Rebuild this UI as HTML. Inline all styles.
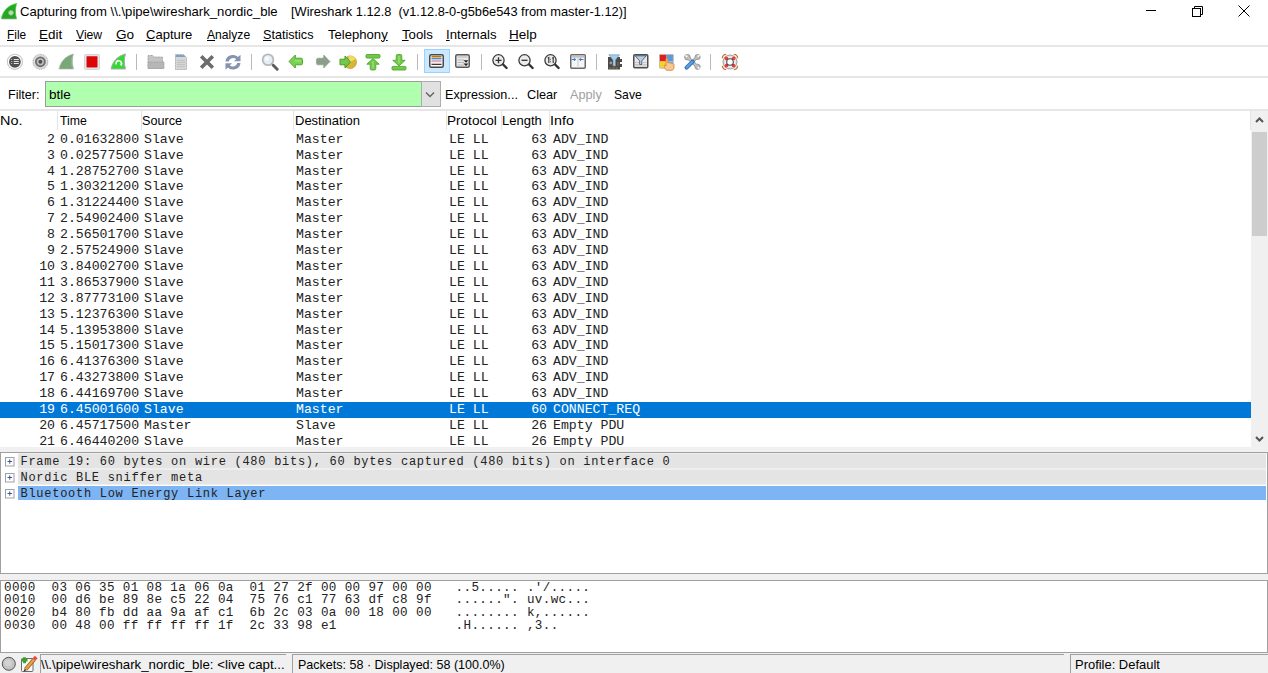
<!DOCTYPE html><html><head><meta charset="utf-8"><style>
*{margin:0;padding:0;box-sizing:border-box}
html,body{width:1268px;height:673px;overflow:hidden;background:#fff;position:relative}
div,svg{position:absolute}
.ui{font-family:"Liberation Sans",sans-serif;font-size:13px;line-height:15px;color:#000;white-space:pre}
.m{font-family:"Liberation Mono",monospace;font-size:13.2px;line-height:15.9px;color:#222;white-space:pre}
.u{text-decoration:underline;text-underline-offset:1px;text-decoration-thickness:1px}
.sep{background:#e6e6e6;height:2px;left:0;width:1268px}
.tsep{width:1px;height:16px;top:54px;background:#b9b9b9}
.hsep{width:1px;top:111px;height:19px;background:#e5e5e5}
</style></head><body>

<svg style="left:1px;top:3px" width="17" height="17" viewBox="0 0 17 17"><path d="M0.4 15.8 C1.5 9 6 2.5 15.6 0.4 C14.2 5 14 11 15.6 15.8 Z" fill="#22a822" stroke="#4cc84c" stroke-width="0.7"/><path d="M1.5 15.6 H15" stroke="#6a9a6a" stroke-width="1"/><circle cx="10" cy="9.8" r="2.4" fill="#b8d8b0" stroke="#a0c098" stroke-width="1" stroke-dasharray="1 0.8"/></svg>
<div class="ui" style="left:19.99px;top:3.5999999999999996px;transform:scaleX(1.0102);transform-origin:0 0;">Capturing from \\.\pipe\wireshark_nordic_ble</div>
<div class="ui" style="left:290.81px;top:3.5999999999999996px;transform:scaleX(0.9858);transform-origin:0 0;">[Wireshark 1.12.8  (v1.12.8-0-g5b6e543 from master-1.12)]</div>
<div style="left:1146px;top:10px;width:10px;height:1px;background:#000"></div>
<svg style="left:1190px;top:4px" width="14" height="14" viewBox="0 0 14 14"><rect x="2.5" y="4.5" width="8" height="8" fill="none" stroke="#000" stroke-width="1"/><path d="M4.5 4.5 V2.5 H12.5 V10.5 H10.5" fill="none" stroke="#000" stroke-width="1"/></svg>
<svg style="left:1238px;top:5px" width="12" height="12" viewBox="0 0 12 12"><path d="M0.5 0.5 L11.5 11.5 M11.5 0.5 L0.5 11.5" stroke="#000" stroke-width="1"/></svg>
<div class="ui" style="left:6.99px;top:26.6px;transform:scaleX(0.915);transform-origin:0 0;"><span class="u">F</span>ile</div>
<div class="ui" style="left:39.37px;top:26.6px;transform:scaleX(1.0333);transform-origin:0 0;"><span class="u">E</span>dit</div>
<div class="ui" style="left:76.3px;top:26.6px;transform:scaleX(0.9357);transform-origin:0 0;"><span class="u">V</span>iew</div>
<div class="ui" style="left:115.66px;top:26.6px;transform:scaleX(1.0438);transform-origin:0 0;"><span class="u">G</span>o</div>
<div class="ui" style="left:146.3px;top:26.6px;transform:scaleX(1.0022);transform-origin:0 0;"><span class="u">C</span>apture</div>
<div class="ui" style="left:207.3px;top:26.6px;transform:scaleX(0.9326);transform-origin:0 0;"><span class="u">A</span>nalyze</div>
<div class="ui" style="left:263.43px;top:26.6px;transform:scaleX(0.9706);transform-origin:0 0;"><span class="u">S</span>tatistics</div>
<div class="ui" style="left:328.0px;top:26.6px;transform:scaleX(1.0068);transform-origin:0 0;">Telephon<span class="u">y</span></div>
<div class="ui" style="left:401.5px;top:26.6px;transform:scaleX(1.0167);transform-origin:0 0;"><span class="u">T</span>ools</div>
<div class="ui" style="left:446.19px;top:26.6px;transform:scaleX(1.0125);transform-origin:0 0;"><span class="u">I</span>nternals</div>
<div class="ui" style="left:509.26px;top:26.6px;transform:scaleX(1.036);transform-origin:0 0;"><span class="u">H</span>elp</div>
<div class="sep" style="top:44.6px"></div>
<svg style="left:6px;top:53px" width="18" height="18" viewBox="0 0 18 18"><circle cx="8.9" cy="8.8" r="7.6" fill="#fff" stroke="#c8c8c8" stroke-width="1.1"/><circle cx="8.9" cy="8.8" r="5.9" fill="#505050"/><path d="M7.8 6.5H12.8M7.8 8.5H12.8M7.8 10.5H12.8" stroke="#e6e6e6" stroke-width="1"/><path d="M5 6.5H6.2M5 8.5H6.2M5 10.5H6.2" stroke="#b0b0b0" stroke-width="1"/></svg>
<svg style="left:31px;top:53px" width="18" height="18" viewBox="0 0 18 18"><circle cx="9.4" cy="8.8" r="7.4" fill="#dcdcdc" stroke="#b4b4b4" stroke-width="1.2" stroke-dasharray="1 0.7"/><circle cx="9.4" cy="8.8" r="5.4" fill="#6e6e6e"/><circle cx="9.4" cy="8.8" r="3.5" fill="#c4c4c4" stroke="#9a9a9a" stroke-width="0.6" stroke-dasharray="0.8 0.6"/><circle cx="9.4" cy="8.8" r="2" fill="#505050"/></svg>
<svg style="left:58px;top:53px" width="17" height="17" viewBox="0 0 17 17"><path d="M1 16 C2.5 9 7 3 15.5 1 C14 5 14 11 15.5 16 Z" fill="#78a878" stroke="#b4b4b4" stroke-width="1" stroke-dasharray="1 0.6"/><path d="M13.6 5 V14" stroke="#a8d8a0" stroke-width="0.8" stroke-dasharray="0.8 1"/></svg>
<svg style="left:84px;top:54px" width="16" height="16" viewBox="0 0 16 16"><rect x="0.5" y="0.5" width="15" height="15" rx="1" fill="#e2e5e8" stroke="#d0d4d8" stroke-width="1"/><rect x="2.5" y="2.2" width="11" height="11.2" rx="0.6" fill="#dc0606"/></svg>
<svg style="left:110px;top:53px" width="17" height="17" viewBox="0 0 17 17"><path d="M1 16 C2.5 9 7 3 15.5 1 C14 5 14 11 15.5 16 Z" fill="#36d636" stroke="#a8b0a8" stroke-width="1"/><path d="M6.2 11.5 A2.8 2.8 0 1 1 11 12.2" fill="none" stroke="#f0fff0" stroke-width="1.6"/><path d="M9.5 10.8 L11.8 13.6 L12.4 10.2 Z" fill="#f0fff0"/></svg>
<div class="tsep" style="left:136px"></div>
<svg style="left:147px;top:54px" width="18" height="16" viewBox="0 0 18 16"><path d="M1 1.5 H5.8 L7 3 H15.5 V14.5 H1 Z" fill="#c4c4c4" stroke="#a4a4a4" stroke-width="1" stroke-dasharray="1 0.5"/><path d="M1.2 8 H17 V14.5 H1.2 Z" fill="#b6b6b6" stroke="#a4a4a4" stroke-width="1" stroke-dasharray="1 0.5"/></svg>
<svg style="left:174px;top:54px" width="14" height="17" viewBox="0 0 14 17"><path d="M1.5 0.5 H9.5 L12.5 3.5 V15.5 H1.5 Z" fill="#d6d6d6" stroke="#aaaaaa" stroke-width="1" stroke-dasharray="1 0.5"/><path d="M2 1 H9.5 L11.5 3 H2 Z" fill="#7aa2cc"/><path d="M3 6.5H11M3 8.5H11M3 10.5H11M3 12.5H11" stroke="#bcbcbc" stroke-width="0.8"/></svg>
<svg style="left:199px;top:54px" width="16" height="16" viewBox="0 0 16 16"><path d="M2.2 2.2 L13.8 13.8 M13.8 2.2 L2.2 13.8" stroke="#6c6c6c" stroke-width="3.6"/></svg>
<svg style="left:224px;top:54px" width="18" height="17" viewBox="0 0 18 17"><path d="M1.5 7.5 C2 3 5.5 1 9 1 C11.5 1 13 2 14 3 L16.5 0.8 V7.2 H10 L12.2 5 C11.4 4.3 10.4 4 9.2 4 C7 4 5.3 5.4 4.8 7.5 Z" fill="#8494ae"/><path d="M16.5 9 C16 13.5 12.5 15.5 9 15.5 C6.5 15.5 5 14.5 4 13.5 L1.5 15.7 V9.3 H8 L5.8 11.5 C6.6 12.2 7.6 12.5 8.8 12.5 C11 12.5 12.7 11.1 13.2 9 Z" fill="#8494ae"/></svg>
<div class="tsep" style="left:251px"></div>
<svg style="left:261px;top:53px" width="19" height="19" viewBox="0 0 19 19"><path d="M12 12 L16.2 16.2" stroke="#5e5e5e" stroke-width="3" stroke-linecap="round"/><circle cx="7" cy="6.8" r="5.4" fill="#e4eef6" stroke="#b8b8b8" stroke-width="1.8"/><circle cx="6" cy="5.6" r="2.2" fill="#fff" opacity="0.7"/></svg>
<svg style="left:288px;top:54px" width="16" height="16" viewBox="0 0 16 16"><path d="M1 7.5 L7.3 1 V4.2 H13 Q14.5 4.2 14.5 5.7 V9.3 Q14.5 10.8 13 10.8 H7.3 V14 Z" fill="#7ad050" stroke="#52a82c" stroke-width="1"/><path d="M7 7 H13" stroke="#a8e890" stroke-width="1"/></svg>
<svg style="left:315px;top:54px" width="16" height="16" viewBox="0 0 16 16"><path d="M15 7.5 L8.7 1 V4.2 H3 Q1.5 4.2 1.5 5.7 V9.3 Q1.5 10.8 3 10.8 H8.7 V14 Z" fill="#8e9c8e" stroke="#78a878" stroke-width="1" stroke-dasharray="1 0.6"/></svg>
<svg style="left:339px;top:54px" width="18" height="16" viewBox="0 0 18 16"><circle cx="11.2" cy="8.2" r="6.3" fill="#d6b632" stroke="#d09a50" stroke-width="0.8"/><path d="M11.2 8.2 L9.5 2.2 A6.3 6.3 0 0 1 16.5 5 Z" fill="#f0e050"/><path d="M10.4 8 L9.8 3 L12 4 Z" fill="#f4c8b0"/><path d="M1 5.2 H6 V2 L11.5 8 L6 14 V10.8 H1 Z" fill="#72c84a" stroke="#46a022" stroke-width="1"/></svg>
<svg style="left:365px;top:54px" width="16" height="17" viewBox="0 0 16 17"><rect x="1" y="0.5" width="14" height="3.6" rx="1" fill="#72c84a" stroke="#52a82c" stroke-width="0.9"/><path d="M8 4.6 L14.2 10.2 H10.8 V14.6 Q10.8 16 9.4 16 H6.6 Q5.2 16 5.2 14.6 V10.2 H1.8 Z" fill="#72c84a" stroke="#52a82c" stroke-width="0.9"/><path d="M8 7 V14.5" stroke="#a8e890" stroke-width="1"/></svg>
<svg style="left:391px;top:54px" width="16" height="17" viewBox="0 0 16 17"><rect x="1" y="12.4" width="14" height="3.6" rx="1" fill="#72c84a" stroke="#52a82c" stroke-width="0.9"/><path d="M8 11.9 L14.2 6.3 H10.8 V1.9 Q10.8 0.5 9.4 0.5 H6.6 Q5.2 0.5 5.2 1.9 V6.3 H1.8 Z" fill="#72c84a" stroke="#52a82c" stroke-width="0.9"/><path d="M8 2 V9.5" stroke="#a8e890" stroke-width="1"/></svg>
<div class="tsep" style="left:417px"></div>
<div style="left:424px;top:49px;width:26px;height:24px;background:#cce8ff;border:1px solid #99d1ff"></div>
<svg style="left:429px;top:54px" width="15" height="14" viewBox="0 0 15 14"><rect x="0.75" y="0.75" width="13.5" height="12.5" rx="1.5" fill="#fafafa" stroke="#4a4a4a" stroke-width="1.5"/><path d="M2.5 2.5H12.5" stroke="#d85a4a" stroke-width="1"/><path d="M2.5 3.5H12.5" stroke="#b8d84a" stroke-width="1"/><path d="M2.5 4.5H12.5" stroke="#4a8ad8" stroke-width="1"/><path d="M2.5 6H12.5" stroke="#7aaab8" stroke-width="1"/><path d="M2.5 7.2H12.5" stroke="#d87a8a" stroke-width="0.9"/><path d="M2.5 9.3H12.5" stroke="#d0a0b0" stroke-width="0.9"/><path d="M2.5 10.5H12.5" stroke="#3a3a3a" stroke-width="1"/></svg>
<svg style="left:455px;top:54px" width="15" height="14" viewBox="0 0 15 14"><rect x="0.75" y="0.75" width="13.5" height="12.5" rx="1.5" fill="#eaeaea" stroke="#5a5a5a" stroke-width="1.5"/><path d="M2.5 3H12.5M2.5 6H9M2.5 8.5H9M2.5 11H9" stroke="#b4b4b4" stroke-width="1.2"/><path d="M8.5 6.3 H13.5 L11 8.8 Z M8.5 9.6 H13.5 L11 12.1 Z" fill="#202020"/></svg>
<div class="tsep" style="left:481px"></div>
<svg style="left:492px;top:53px" width="18" height="18" viewBox="0 0 18 18"><path d="M10.6 11 L14.6 15" stroke="#303030" stroke-width="2.4" stroke-linecap="round"/><circle cx="6.5" cy="7.3" r="5.6" fill="#ececec" stroke="#3a3a3a" stroke-width="1.3"/><path d="M3.5 7.3H9.5M6.5 4.3V10.3" stroke="#303030" stroke-width="1.3"/></svg>
<svg style="left:518px;top:53px" width="18" height="18" viewBox="0 0 18 18"><path d="M10.6 11 L14.6 15" stroke="#303030" stroke-width="2.4" stroke-linecap="round"/><circle cx="6.5" cy="7.3" r="5.6" fill="#ececec" stroke="#3a3a3a" stroke-width="1.3"/><path d="M3.5 7.3H9.5" stroke="#303030" stroke-width="1.3"/></svg>
<svg style="left:544px;top:53px" width="18" height="18" viewBox="0 0 18 18"><path d="M10.6 11 L14.6 15" stroke="#303030" stroke-width="2.4" stroke-linecap="round"/><circle cx="6.5" cy="7.3" r="5.6" fill="#ececec" stroke="#3a3a3a" stroke-width="1.3"/><path d="M3.8 5.3 L4.8 4.6 V10 M8.2 5.3 L9.2 4.6 V10" stroke="#303030" stroke-width="1.1" fill="none"/><path d="M6.5 5.8V6.6M6.5 8.4V9.2" stroke="#303030" stroke-width="1"/></svg>
<svg style="left:570px;top:54px" width="16" height="15" viewBox="0 0 16 15"><rect x="0.75" y="0.75" width="14.5" height="13.5" rx="1" fill="#f6f6f6" stroke="#6a6a6a" stroke-width="1.5"/><rect x="1.5" y="1.5" width="13" height="2.2" fill="#c0c0c0"/><path d="M8 3.5V14" stroke="#d0d0d0" stroke-width="1.2"/><path d="M1.8 5.5H5.2M4 4.3L5.4 5.5L4 6.7M9.8 5.5H13.5M11 4.3L9.6 5.5L11 6.7" stroke="#3b78c8" stroke-width="1.1" fill="none"/></svg>
<div class="tsep" style="left:596px"></div>
<svg style="left:607px;top:54px" width="17" height="17" viewBox="0 0 17 17"><path d="M1 3 H13 V5 H15 V8 H13 V10 H15 V13 H13 V15.5 H1 Z" fill="#4a4a4a"/><circle cx="3.8" cy="9" r="1.4" fill="#9a9a9a"/><path d="M2 14H11" stroke="#b08a3a" stroke-width="1" stroke-dasharray="0.8 0.6"/><path d="M10 9H12M10 11H12" stroke="#a07a30" stroke-width="0.8"/><path d="M1.8 0.8 H12.5 L8.5 6 V12 H6 V6 Z" fill="#a6cdee" stroke="#6a8aa8" stroke-width="0.6"/></svg>
<svg style="left:633px;top:54px" width="16" height="15" viewBox="0 0 16 15"><rect x="0.75" y="0.75" width="14" height="13" rx="1" fill="#e8e8e8" stroke="#4e4e4e" stroke-width="1.5"/><path d="M2.2 1.8 H13.2 L8.8 6.8 V10.5 H6.6 V6.8 Z" fill="#b0d0ee" stroke="#3a3a3a" stroke-width="0.7"/><path d="M2 8.5H6M9.5 8.5H13.5M2 10.5H6M9.5 10.5H13.5M2 12H13.5" stroke="#bcbcbc" stroke-width="0.8"/></svg>
<svg style="left:659px;top:54px" width="17" height="17" viewBox="0 0 17 17"><rect x="0.5" y="0.5" width="7" height="7" fill="#e01c1c"/><rect x="7.5" y="0.5" width="6.8" height="7" fill="#5a9ad8"/><rect x="0.5" y="7.5" width="7" height="6.8" fill="#f2d430"/><rect x="7.5" y="7.5" width="6.8" height="6.8" fill="#78b0e4"/><rect x="0.5" y="0.5" width="13.8" height="13.8" rx="1" fill="none" stroke="#b8b8b8" stroke-width="0.8"/><path d="M7.5 16.3 C5.5 14.5 5 12.6 5.4 11 L7 12 V5 C7 4 8.8 4 8.8 5 V9 C9.5 8.5 10.5 8.5 11 9.2 C11.6 8.8 12.6 8.9 13 9.7 C13.6 9.4 14.8 9.6 15 10.6 V13 C15 14.6 14 16.3 13 16.3 Z" fill="#f4c890" stroke="#d88a40" stroke-width="0.9"/></svg>
<svg style="left:684px;top:54px" width="17" height="16" viewBox="0 0 17 16"><g stroke="#8e8e8e" stroke-width="0.8" fill="#b8b8b8"><path d="M4 3.6 L13.2 12.6" stroke="#8e8e8e" stroke-width="3.4"/><path d="M13 3.2 L9 7.2" stroke="#8e8e8e" stroke-width="3"/><circle cx="3.4" cy="3.2" r="2.8"/><circle cx="13.6" cy="3" r="2.6"/><circle cx="13.6" cy="12.8" r="2.6"/></g><path d="M4 3.6 L13.2 12.6" stroke="#c4c4c4" stroke-width="2"/><path d="M13 3.2 L9 7.2" stroke="#c4c4c4" stroke-width="1.6"/><g stroke="#fff" stroke-width="1.6"><path d="M1.6 1.4 L3.2 3"/><path d="M15.4 1.2 L13.8 2.8"/><path d="M15.4 14.6 L13.8 13"/></g><path d="M8.6 7.6 L2.6 13.6" stroke="#2f6fb8" stroke-width="4" stroke-linecap="round"/><path d="M8.4 7.8 L2.8 13.4" stroke="#5aa0e0" stroke-width="2.2" stroke-linecap="round"/></svg>
<div class="tsep" style="left:710px"></div>
<svg style="left:721px;top:53px" width="18" height="18" viewBox="0 0 18 18"><g fill="none" stroke="#c07838" stroke-width="1.3"><path d="M1.4 5.2 A4 4 0 0 1 5.2 1.4"/><path d="M12.8 1.4 A4 4 0 0 1 16.6 5.2"/><path d="M1.4 12.8 A4 4 0 0 0 5.2 16.6"/><path d="M12.8 16.6 A4 4 0 0 0 16.6 12.8"/></g><circle cx="9" cy="9" r="7" fill="#f0f0f0" stroke="#8c8c8c" stroke-width="0.9"/><circle cx="9" cy="9" r="5.6" fill="none" stroke="#dadada" stroke-width="0.7"/><g fill="#ec3c3c"><circle cx="5.4" cy="5.4" r="1.9"/><circle cx="12.6" cy="5.4" r="1.9"/><circle cx="5.4" cy="12.6" r="1.9"/><circle cx="12.6" cy="12.6" r="1.9"/></g><circle cx="9" cy="9" r="3.3" fill="#fff" stroke="#4a4a4a" stroke-width="1.1"/></svg>
<div class="sep" style="top:75.8px"></div>
<div class="ui" style="left:7.53px;top:86.6px;transform:scaleX(0.9677);transform-origin:0 0;">Filter:</div>
<div style="left:45px;top:81px;width:377px;height:26px;background:#afffaf;border:1px solid #9c9c9c;border-right:none"></div>
<div class="ui" style="left:49.16px;top:86.6px;transform:scaleX(1.04);transform-origin:0 0;">btle</div>
<div style="left:421px;top:81px;width:20px;height:26px;background:#e1e1e1;border:1px solid #adadad"></div>
<svg style="left:425px;top:91px" width="10" height="7" viewBox="0 0 10 7"><path d="M1 1.5 L5 5.5 L9 1.5" fill="none" stroke="#606060" stroke-width="1.3"/></svg>
<div class="ui" style="left:445.13px;top:86.6px;transform:scaleX(0.9699);transform-origin:0 0;">Expression...</div>
<div class="ui" style="left:527.22px;top:86.6px;transform:scaleX(0.9767);transform-origin:0 0;">Clear</div>
<div class="ui" style="left:569.8px;top:86.6px;transform:scaleX(0.9758);transform-origin:0 0;color:#a0a0a0">Apply</div>
<div class="ui" style="left:614.36px;top:86.6px;transform:scaleX(0.9357);transform-origin:0 0;">Save</div>
<div class="sep" style="top:108.5px"></div>
<div class="hsep" style="left:57.1px"></div>
<div class="hsep" style="left:140.5px"></div>
<div class="hsep" style="left:292.5px"></div>
<div class="hsep" style="left:446.0px"></div>
<div class="hsep" style="left:501.0px"></div>
<div class="hsep" style="left:549.0px"></div>
<div class="hsep" style="left:1249.5px"></div>
<div class="ui" style="left:0.39px;top:113.3px;transform:scaleX(1.1111);transform-origin:0 0;">No.</div>
<div class="ui" style="left:60.0px;top:113.3px;transform:scaleX(0.9464);transform-origin:0 0;">Time</div>
<div class="ui" style="left:141.83px;top:113.3px;transform:scaleX(0.9725);transform-origin:0 0;">Source</div>
<div class="ui" style="left:295.0px;top:113.3px;transform:scaleX(1.0);transform-origin:0 0;">Destination</div>
<div class="ui" style="left:446.96px;top:113.3px;transform:scaleX(1.0435);transform-origin:0 0;">Protocol</div>
<div class="ui" style="left:502.0px;top:113.3px;transform:scaleX(1.0);transform-origin:0 0;">Length</div>
<div class="ui" style="left:549.9px;top:113.3px;transform:scaleX(1.1);transform-origin:0 0;">Info</div>
<div class="m" style="left:0;top:131.7px;width:55px;text-align:right;color:#222">2</div>
<div class="m" style="left:60px;top:131.7px;width:81px;overflow:hidden;color:#222">0.01632800</div>
<div class="m" style="left:144px;top:131.7px;color:#222">Slave</div>
<div class="m" style="left:296px;top:131.7px;color:#222">Master</div>
<div class="m" style="left:449px;top:131.7px;color:#222">LE LL</div>
<div class="m" style="left:500px;top:131.7px;width:47px;text-align:right;color:#222">63</div>
<div class="m" style="left:553px;top:131.7px;color:#222">ADV_IND</div>
<div class="m" style="left:0;top:147.6px;width:55px;text-align:right;color:#222">3</div>
<div class="m" style="left:60px;top:147.6px;width:81px;overflow:hidden;color:#222">0.02577500</div>
<div class="m" style="left:144px;top:147.6px;color:#222">Slave</div>
<div class="m" style="left:296px;top:147.6px;color:#222">Master</div>
<div class="m" style="left:449px;top:147.6px;color:#222">LE LL</div>
<div class="m" style="left:500px;top:147.6px;width:47px;text-align:right;color:#222">63</div>
<div class="m" style="left:553px;top:147.6px;color:#222">ADV_IND</div>
<div class="m" style="left:0;top:163.5px;width:55px;text-align:right;color:#222">4</div>
<div class="m" style="left:60px;top:163.5px;width:81px;overflow:hidden;color:#222">1.28752700</div>
<div class="m" style="left:144px;top:163.5px;color:#222">Slave</div>
<div class="m" style="left:296px;top:163.5px;color:#222">Master</div>
<div class="m" style="left:449px;top:163.5px;color:#222">LE LL</div>
<div class="m" style="left:500px;top:163.5px;width:47px;text-align:right;color:#222">63</div>
<div class="m" style="left:553px;top:163.5px;color:#222">ADV_IND</div>
<div class="m" style="left:0;top:179.39999999999998px;width:55px;text-align:right;color:#222">5</div>
<div class="m" style="left:60px;top:179.39999999999998px;width:81px;overflow:hidden;color:#222">1.30321200</div>
<div class="m" style="left:144px;top:179.39999999999998px;color:#222">Slave</div>
<div class="m" style="left:296px;top:179.39999999999998px;color:#222">Master</div>
<div class="m" style="left:449px;top:179.39999999999998px;color:#222">LE LL</div>
<div class="m" style="left:500px;top:179.39999999999998px;width:47px;text-align:right;color:#222">63</div>
<div class="m" style="left:553px;top:179.39999999999998px;color:#222">ADV_IND</div>
<div class="m" style="left:0;top:195.29999999999998px;width:55px;text-align:right;color:#222">6</div>
<div class="m" style="left:60px;top:195.29999999999998px;width:81px;overflow:hidden;color:#222">1.31224400</div>
<div class="m" style="left:144px;top:195.29999999999998px;color:#222">Slave</div>
<div class="m" style="left:296px;top:195.29999999999998px;color:#222">Master</div>
<div class="m" style="left:449px;top:195.29999999999998px;color:#222">LE LL</div>
<div class="m" style="left:500px;top:195.29999999999998px;width:47px;text-align:right;color:#222">63</div>
<div class="m" style="left:553px;top:195.29999999999998px;color:#222">ADV_IND</div>
<div class="m" style="left:0;top:211.2px;width:55px;text-align:right;color:#222">7</div>
<div class="m" style="left:60px;top:211.2px;width:81px;overflow:hidden;color:#222">2.54902400</div>
<div class="m" style="left:144px;top:211.2px;color:#222">Slave</div>
<div class="m" style="left:296px;top:211.2px;color:#222">Master</div>
<div class="m" style="left:449px;top:211.2px;color:#222">LE LL</div>
<div class="m" style="left:500px;top:211.2px;width:47px;text-align:right;color:#222">63</div>
<div class="m" style="left:553px;top:211.2px;color:#222">ADV_IND</div>
<div class="m" style="left:0;top:227.1px;width:55px;text-align:right;color:#222">8</div>
<div class="m" style="left:60px;top:227.1px;width:81px;overflow:hidden;color:#222">2.56501700</div>
<div class="m" style="left:144px;top:227.1px;color:#222">Slave</div>
<div class="m" style="left:296px;top:227.1px;color:#222">Master</div>
<div class="m" style="left:449px;top:227.1px;color:#222">LE LL</div>
<div class="m" style="left:500px;top:227.1px;width:47px;text-align:right;color:#222">63</div>
<div class="m" style="left:553px;top:227.1px;color:#222">ADV_IND</div>
<div class="m" style="left:0;top:243.0px;width:55px;text-align:right;color:#222">9</div>
<div class="m" style="left:60px;top:243.0px;width:81px;overflow:hidden;color:#222">2.57524900</div>
<div class="m" style="left:144px;top:243.0px;color:#222">Slave</div>
<div class="m" style="left:296px;top:243.0px;color:#222">Master</div>
<div class="m" style="left:449px;top:243.0px;color:#222">LE LL</div>
<div class="m" style="left:500px;top:243.0px;width:47px;text-align:right;color:#222">63</div>
<div class="m" style="left:553px;top:243.0px;color:#222">ADV_IND</div>
<div class="m" style="left:0;top:258.9px;width:55px;text-align:right;color:#222">10</div>
<div class="m" style="left:60px;top:258.9px;width:81px;overflow:hidden;color:#222">3.84002700</div>
<div class="m" style="left:144px;top:258.9px;color:#222">Slave</div>
<div class="m" style="left:296px;top:258.9px;color:#222">Master</div>
<div class="m" style="left:449px;top:258.9px;color:#222">LE LL</div>
<div class="m" style="left:500px;top:258.9px;width:47px;text-align:right;color:#222">63</div>
<div class="m" style="left:553px;top:258.9px;color:#222">ADV_IND</div>
<div class="m" style="left:0;top:274.79999999999995px;width:55px;text-align:right;color:#222">11</div>
<div class="m" style="left:60px;top:274.79999999999995px;width:81px;overflow:hidden;color:#222">3.86537900</div>
<div class="m" style="left:144px;top:274.79999999999995px;color:#222">Slave</div>
<div class="m" style="left:296px;top:274.79999999999995px;color:#222">Master</div>
<div class="m" style="left:449px;top:274.79999999999995px;color:#222">LE LL</div>
<div class="m" style="left:500px;top:274.79999999999995px;width:47px;text-align:right;color:#222">63</div>
<div class="m" style="left:553px;top:274.79999999999995px;color:#222">ADV_IND</div>
<div class="m" style="left:0;top:290.7px;width:55px;text-align:right;color:#222">12</div>
<div class="m" style="left:60px;top:290.7px;width:81px;overflow:hidden;color:#222">3.87773100</div>
<div class="m" style="left:144px;top:290.7px;color:#222">Slave</div>
<div class="m" style="left:296px;top:290.7px;color:#222">Master</div>
<div class="m" style="left:449px;top:290.7px;color:#222">LE LL</div>
<div class="m" style="left:500px;top:290.7px;width:47px;text-align:right;color:#222">63</div>
<div class="m" style="left:553px;top:290.7px;color:#222">ADV_IND</div>
<div class="m" style="left:0;top:306.6px;width:55px;text-align:right;color:#222">13</div>
<div class="m" style="left:60px;top:306.6px;width:81px;overflow:hidden;color:#222">5.12376300</div>
<div class="m" style="left:144px;top:306.6px;color:#222">Slave</div>
<div class="m" style="left:296px;top:306.6px;color:#222">Master</div>
<div class="m" style="left:449px;top:306.6px;color:#222">LE LL</div>
<div class="m" style="left:500px;top:306.6px;width:47px;text-align:right;color:#222">63</div>
<div class="m" style="left:553px;top:306.6px;color:#222">ADV_IND</div>
<div class="m" style="left:0;top:322.5px;width:55px;text-align:right;color:#222">14</div>
<div class="m" style="left:60px;top:322.5px;width:81px;overflow:hidden;color:#222">5.13953800</div>
<div class="m" style="left:144px;top:322.5px;color:#222">Slave</div>
<div class="m" style="left:296px;top:322.5px;color:#222">Master</div>
<div class="m" style="left:449px;top:322.5px;color:#222">LE LL</div>
<div class="m" style="left:500px;top:322.5px;width:47px;text-align:right;color:#222">63</div>
<div class="m" style="left:553px;top:322.5px;color:#222">ADV_IND</div>
<div class="m" style="left:0;top:338.4px;width:55px;text-align:right;color:#222">15</div>
<div class="m" style="left:60px;top:338.4px;width:81px;overflow:hidden;color:#222">5.15017300</div>
<div class="m" style="left:144px;top:338.4px;color:#222">Slave</div>
<div class="m" style="left:296px;top:338.4px;color:#222">Master</div>
<div class="m" style="left:449px;top:338.4px;color:#222">LE LL</div>
<div class="m" style="left:500px;top:338.4px;width:47px;text-align:right;color:#222">63</div>
<div class="m" style="left:553px;top:338.4px;color:#222">ADV_IND</div>
<div class="m" style="left:0;top:354.29999999999995px;width:55px;text-align:right;color:#222">16</div>
<div class="m" style="left:60px;top:354.29999999999995px;width:81px;overflow:hidden;color:#222">6.41376300</div>
<div class="m" style="left:144px;top:354.29999999999995px;color:#222">Slave</div>
<div class="m" style="left:296px;top:354.29999999999995px;color:#222">Master</div>
<div class="m" style="left:449px;top:354.29999999999995px;color:#222">LE LL</div>
<div class="m" style="left:500px;top:354.29999999999995px;width:47px;text-align:right;color:#222">63</div>
<div class="m" style="left:553px;top:354.29999999999995px;color:#222">ADV_IND</div>
<div class="m" style="left:0;top:370.2px;width:55px;text-align:right;color:#222">17</div>
<div class="m" style="left:60px;top:370.2px;width:81px;overflow:hidden;color:#222">6.43273800</div>
<div class="m" style="left:144px;top:370.2px;color:#222">Slave</div>
<div class="m" style="left:296px;top:370.2px;color:#222">Master</div>
<div class="m" style="left:449px;top:370.2px;color:#222">LE LL</div>
<div class="m" style="left:500px;top:370.2px;width:47px;text-align:right;color:#222">63</div>
<div class="m" style="left:553px;top:370.2px;color:#222">ADV_IND</div>
<div class="m" style="left:0;top:386.1px;width:55px;text-align:right;color:#222">18</div>
<div class="m" style="left:60px;top:386.1px;width:81px;overflow:hidden;color:#222">6.44169700</div>
<div class="m" style="left:144px;top:386.1px;color:#222">Slave</div>
<div class="m" style="left:296px;top:386.1px;color:#222">Master</div>
<div class="m" style="left:449px;top:386.1px;color:#222">LE LL</div>
<div class="m" style="left:500px;top:386.1px;width:47px;text-align:right;color:#222">63</div>
<div class="m" style="left:553px;top:386.1px;color:#222">ADV_IND</div>
<div style="left:0;top:402.0px;width:1250.5px;height:15.9px;background:#0078d7"></div>
<div class="m" style="left:0;top:402.0px;width:55px;text-align:right;color:#fff">19</div>
<div class="m" style="left:60px;top:402.0px;width:81px;overflow:hidden;color:#fff">6.45001600</div>
<div class="m" style="left:144px;top:402.0px;color:#fff">Slave</div>
<div class="m" style="left:296px;top:402.0px;color:#fff">Master</div>
<div class="m" style="left:449px;top:402.0px;color:#fff">LE LL</div>
<div class="m" style="left:500px;top:402.0px;width:47px;text-align:right;color:#fff">60</div>
<div class="m" style="left:553px;top:402.0px;color:#fff">CONNECT_REQ</div>
<div class="m" style="left:0;top:417.9px;width:55px;text-align:right;color:#222">20</div>
<div class="m" style="left:60px;top:417.9px;width:81px;overflow:hidden;color:#222">6.45717500</div>
<div class="m" style="left:144px;top:417.9px;color:#222">Master</div>
<div class="m" style="left:296px;top:417.9px;color:#222">Slave</div>
<div class="m" style="left:449px;top:417.9px;color:#222">LE LL</div>
<div class="m" style="left:500px;top:417.9px;width:47px;text-align:right;color:#222">26</div>
<div class="m" style="left:553px;top:417.9px;color:#222">Empty PDU</div>
<div class="m" style="left:0;top:433.8px;width:55px;text-align:right;color:#222">21</div>
<div class="m" style="left:60px;top:433.8px;width:81px;overflow:hidden;color:#222">6.46440200</div>
<div class="m" style="left:144px;top:433.8px;color:#222">Slave</div>
<div class="m" style="left:296px;top:433.8px;color:#222">Master</div>
<div class="m" style="left:449px;top:433.8px;color:#222">LE LL</div>
<div class="m" style="left:500px;top:433.8px;width:47px;text-align:right;color:#222">26</div>
<div class="m" style="left:553px;top:433.8px;color:#222">Empty PDU</div>
<div style="left:0;top:447px;width:1268px;height:5px;background:#f0f0f0"></div>
<div style="left:1251px;top:110.5px;width:17px;height:336.5px;background:#f0f0f0"></div>
<svg style="left:1255px;top:117px" width="9" height="6" viewBox="0 0 9 6"><path d="M1 5 L4.5 1.5 L8 5" fill="none" stroke="#555" stroke-width="2"/></svg>
<div style="left:1252px;top:132px;width:15px;height:103.5px;background:#cdcdcd"></div>
<svg style="left:1255px;top:435.5px" width="9" height="6" viewBox="0 0 9 6"><path d="M1 1 L4.5 4.5 L8 1" fill="none" stroke="#555" stroke-width="2"/></svg>
<div style="left:0;top:452px;width:1268px;height:122px;border:1px solid #a0a0a0;background:#fff"></div>
<div style="left:18px;top:453px;width:1248px;height:32px;background:#eeeeee"></div>
<div style="left:18px;top:454.0px;width:1248px;height:14.2px;background:#e4e4e4"></div>
<svg style="left:4px;top:457px" width="11" height="10" viewBox="0 0 11 10"><rect x="1.5" y="0.5" width="8.5" height="8.5" fill="#fff" stroke="#a0a0a0" stroke-width="1"/><path d="M3.5 4.5H8M5.75 2.3V6.7" stroke="#3a5a9a" stroke-width="1"/></svg>
<div class="m" style="left:20.5px;top:455.0px;line-height:15.8px;font-size:12px;letter-spacing:0.725px">Frame 19: 60 bytes on wire (480 bits), 60 bytes captured (480 bits) on interface 0</div>
<div style="left:18px;top:469.75px;width:1248px;height:14.2px;background:#e4e4e4"></div>
<svg style="left:4px;top:473px" width="11" height="10" viewBox="0 0 11 10"><rect x="1.5" y="0.5" width="8.5" height="8.5" fill="#fff" stroke="#a0a0a0" stroke-width="1"/><path d="M3.5 4.5H8M5.75 2.3V6.7" stroke="#3a5a9a" stroke-width="1"/></svg>
<div class="m" style="left:20.5px;top:470.75px;line-height:15.8px;font-size:12px;letter-spacing:0.725px">Nordic BLE sniffer meta</div>
<div style="left:18px;top:485.5px;width:1248px;height:14.2px;background:#7db4f4"></div>
<svg style="left:4px;top:489px" width="11" height="10" viewBox="0 0 11 10"><rect x="1.5" y="0.5" width="8.5" height="8.5" fill="#fff" stroke="#a0a0a0" stroke-width="1"/><path d="M3.5 4.5H8M5.75 2.3V6.7" stroke="#3a5a9a" stroke-width="1"/></svg>
<div class="m" style="left:20.5px;top:486.5px;line-height:15.8px;font-size:12px;letter-spacing:0.725px">Bluetooth Low Energy Link Layer</div>
<div style="left:0;top:574px;width:1268px;height:6px;background:#f0f0f0"></div>
<div style="left:0;top:580px;width:1268px;height:73px;border:1px solid #a0a0a0;border-bottom:none;background:#fff"></div>
<div class="m" style="left:4px;top:581.5px;font-size:12.6px;letter-spacing:0.365px;line-height:12.85px">0000  03 06 35 01 08 1a 06 0a  01 27 2f 00 00 97 00 00   ..5..... .&#x27;/.....</div>
<div class="m" style="left:4px;top:594.35px;font-size:12.6px;letter-spacing:0.365px;line-height:12.85px">0010  00 d6 be 89 8e c5 22 04  75 76 c1 77 63 df c8 9f   ......&quot;. uv.wc...</div>
<div class="m" style="left:4px;top:607.2px;font-size:12.6px;letter-spacing:0.365px;line-height:12.85px">0020  b4 80 fb dd aa 9a af c1  6b 2c 03 0a 00 18 00 00   ........ k,......</div>
<div class="m" style="left:4px;top:620.05px;font-size:12.6px;letter-spacing:0.365px;line-height:12.85px">0030  00 48 00 ff ff ff ff 1f  2c 33 98 e1               .H...... ,3..</div>
<div style="left:0;top:652px;width:1268px;height:1px;background:#a0a0a0"></div>
<div style="left:0;top:653px;width:1268px;height:20px;background:#f0f0f0"></div>
<svg style="left:1px;top:656px" width="16" height="16" viewBox="0 0 16 16"><circle cx="7.8" cy="7.8" r="6.5" fill="#c4c4c4" stroke="#505050" stroke-width="1"/><circle cx="7.2" cy="7" r="3.6" fill="#d2d2d2"/></svg>
<svg style="left:20px;top:655px" width="18" height="18" viewBox="0 0 18 18"><rect x="1.5" y="3.5" width="11.5" height="13" rx="1" fill="#fafafa" stroke="#6a6a6a" stroke-width="1"/><path d="M1.5 5.2 H7.5 M4.5 2.2 V8.2" stroke="#3aa02a" stroke-width="2.8"/><path d="M5.5 14.5 L14 4.5" stroke="#8a5a20" stroke-width="4"/><path d="M5.5 14.5 L14 4.5" stroke="#eea040" stroke-width="2.6"/><path d="M14 4.5 L16.2 2" stroke="#e84848" stroke-width="3.6"/><path d="M4.2 16 L5.5 14.5" stroke="#303030" stroke-width="1.6"/></svg>
<div style="left:40px;top:654px;width:246px;height:19px;border-top:1px solid #a0a0a0;border-left:1px solid #a0a0a0"></div>
<div class="ui" style="left:41.0px;top:656.5px;transform:scaleX(1.0202);transform-origin:0 0;">\\.\pipe\wireshark_nordic_ble: &lt;live capt...</div>
<div style="left:292px;top:654px;width:772px;height:19px;border-top:1px solid #a0a0a0;border-left:1px solid #a0a0a0"></div>
<div class="ui" style="left:297.84px;top:656.5px;transform:scaleX(0.9634);transform-origin:0 0;">Packets: 58 · Displayed: 58 (100.0%)</div>
<div style="left:1070px;top:654px;width:198px;height:19px;border-top:1px solid #a0a0a0;border-left:1px solid #a0a0a0"></div>
<div class="ui" style="left:1075.1px;top:656.5px;transform:scaleX(0.9952);transform-origin:0 0;">Profile: Default</div>
</body></html>
